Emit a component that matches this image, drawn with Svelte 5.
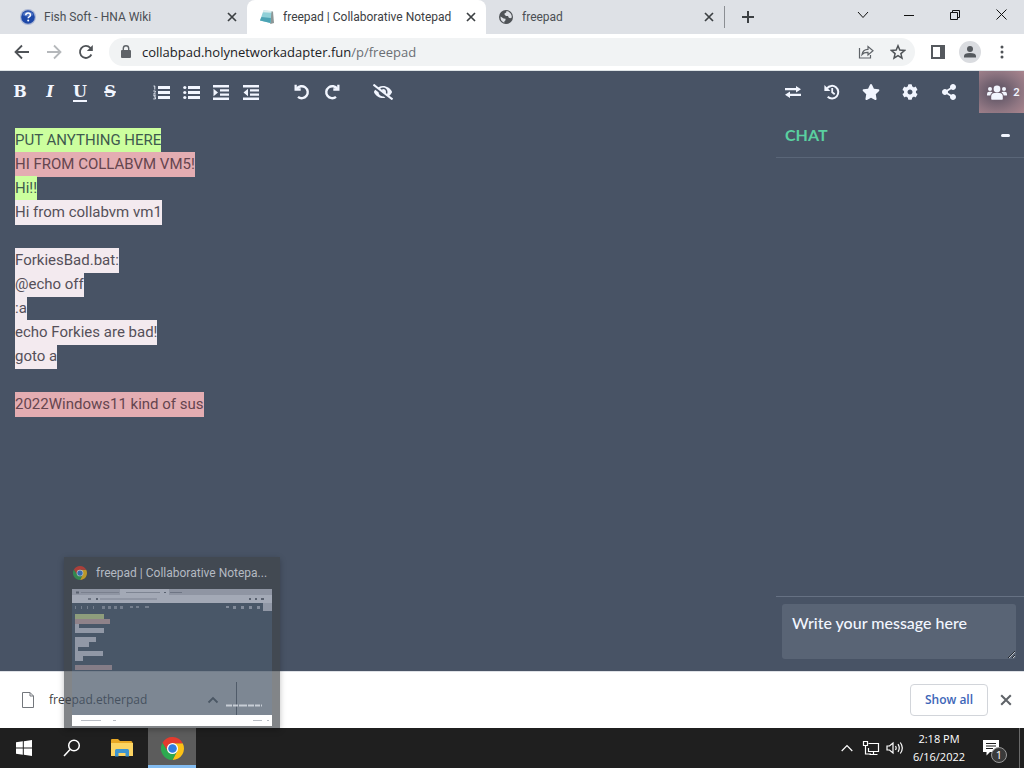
<script>
  const tabs = [
    { title: 'Fish Soft - HNA Wiki', icon: 'help' },
    { title: 'freepad | Collaborative Notepad', icon: 'pad', active: true },
    { title: 'freepad', icon: 'globe' }
  ];

  const lines = [
    { text: 'PUT ANYTHING HERE', author: 'green' },
    { text: 'HI FROM COLLABVM VM5!', author: 'rose' },
    { text: 'Hi!!', author: 'green' },
    { text: 'Hi from collabvm vm1', author: 'pale' },
    { text: '' },
    { text: 'ForkiesBad.bat:', author: 'pale' },
    { text: '@echo off', author: 'pale' },
    { text: ':a', author: 'pale' },
    { text: 'echo Forkies are bad!', author: 'pale' },
    { text: 'goto a', author: 'pale' },
    { text: '' },
    { text: '2022Windows11 kind of sus', author: 'rose' }
  ];

  const textTools = [
    { glyph: 'B', name: 'Bold', cls: 'b' },
    { glyph: 'I', name: 'Italic', cls: 'i' },
    { glyph: 'U', name: 'Underline', cls: 'u' },
    { glyph: 'S', name: 'Strikethrough', cls: 's' }
  ];
</script>

{#snippet cross(size)}
  <svg width={size} height={size} viewBox="0 0 10 10" aria-hidden="true">
    <path d="M1 1l8 8M9 1l-8 8" fill="none" stroke="currentColor" stroke-width="1.7" />
  </svg>
{/snippet}

{#snippet chrome(size)}
  <svg width={size} height={size} viewBox="0 0 48 48" aria-hidden="true">
    <path d="M24 13L45.3 13A24 24 0 0 1 24 48L33.5 29.5Z" fill="#fbc116" />
    <path d="M3.2 12L14.5 29.5L33.5 29.5L24 48A24 24 0 0 1 3.2 12Z" fill="#2da94f" />
    <path d="M3.2 12A24 24 0 0 1 45.3 13H24L14.5 29.5Z" fill="#e33b2e" />
    <circle cx="24" cy="24" r="11.5" fill="#fff" />
    <circle cx="24" cy="24" r="9" fill="#2f7de1" />
  </svg>
{/snippet}

<div class="screen">
  <header class="tabstrip">
    {#each tabs as tab}
      <div class="tab" class:active={tab.active}>
        <span class="favicon">
          {#if tab.icon === 'help'}
            <svg width="16" height="16" viewBox="0 0 16 16" aria-hidden="true">
              <circle cx="8" cy="8" r="8" fill="#aab6d4" />
              <circle cx="8" cy="8" r="6.8" fill="#1d48a8" />
              <path d="M2.5 6a5.8 5 0 0 1 11 0q-5.500 3-11 0" fill="#6689d0" opacity=".7" />
              <path d="M5.700 6.300q.2-2.200 2.400-2.200 2.300 0 2.300 1.900 0 1.200-1.200 1.800-1 .5-1 1.400" fill="none" stroke="#fff" stroke-width="1.500" />
              <circle cx="8.200" cy="11.500" r="1" fill="#fff" />
            </svg>
          {:else if tab.icon === 'pad'}
            <svg width="16" height="16" viewBox="0 0 16 16" aria-hidden="true">
              <path d="M5 2L14 2.500l1 11.500-3.500 1z" fill="#8d9797" />
              <path d="M4.500 1.500L12.500 2 11.500 14 1 11.500z" fill="#8fd0d8" />
              <path d="M2.500 8l9.400 1-.4 5L1 11.500z" fill="#4ba3b4" />
              <path d="M4.500 1.500L12.500 2l-.2 1.800-8.500-.5z" fill="#dceced" />
            </svg>
          {:else}
            <svg width="16" height="16" viewBox="0 0 16 16" aria-hidden="true">
              <circle cx="8" cy="8" r="7" fill="#4f5357" />
              <path d="M2.600 7.500l3 2 1.900.2v1.600l-1.200 1.200v1.300A6 6 0 0 1 2.600 7.500zM8.500 2.100l-.3 1.300-1.700 1v1.200L8 7h2l.8 1.800 1.500.5 1.500-.8A6 6 0 0 0 8.500 2.100z" fill="#dee1e6" />
            </svg>
          {/if}
        </span>
        <span class="title">{tab.title}</span>
        <button class="tab-close" aria-label="Close tab">{@render cross(10)}</button>
      </div>
    {/each}
    <button class="new-tab" aria-label="New tab">
      <svg width="14" height="14" viewBox="0 0 14 14"><path d="M7 1v12M1 7h12" stroke="currentColor" stroke-width="2" /></svg>
    </button>
    <div class="window-controls">
      <button aria-label="Search tabs"><svg width="12" height="12" viewBox="0 0 12 12"><path d="M1 3l5 5.500L11 3" /></svg></button>
      <button aria-label="Minimize"><svg width="10" height="10" viewBox="0 0 10 10"><path d="M0 5.500h10" /></svg></button>
      <button aria-label="Restore"><svg width="10" height="10" viewBox="0 0 10 10"><path d="M.5 2.500h7v7h-7zM2.500 2.500v-2h7v7h-2" /></svg></button>
      <button aria-label="Close"><svg width="11" height="11" viewBox="0 0 11 11"><path d="M.5.5l10 10M10.500.5l-10 10" /></svg></button>
    </div>
  </header>

  <nav class="navbar">
    <div class="nav-buttons">
      <button aria-label="Back"><svg width="16" height="16" viewBox="0 0 16 16"><path d="M15 8H2M8 1.500L1.500 8 8 14.500" /></svg></button>
      <button class="off" aria-label="Forward" disabled><svg width="16" height="16" viewBox="0 0 16 16"><path d="M1 8h13M8 1.500L14.500 8 8 14.500" /></svg></button>
      <button aria-label="Reload"><svg width="16" height="16" viewBox="0 0 16 16"><path d="M13.400 10.500A6 6 0 1 1 12.300 3.800L13.500 5" /><path d="M14.800 1v6h-6z" fill="currentColor" stroke="none" /></svg></button>
    </div>
    <div class="omnibox">
      <svg class="lock" width="10" height="14" viewBox="0 0 10 14" aria-hidden="true"><rect y="5" width="10" height="8" rx="1" fill="#5f6368" /><path d="M2.300 5.500V3.500a2.700 2.700 0 0 1 5.400 0v2" fill="none" stroke="#5f6368" stroke-width="1.400" /></svg>
      <span class="url">collabpad.holynetworkadapter.fun<span>/p/freepad</span></span>
      <button aria-label="Share"><svg width="16" height="16" viewBox="0 0 16 16"><path d="M1.500 4v10h11v-3M4 10.500q.8-5 6-5.200V2.500l5 4.300-5 4.200V8.300q-4-.2-6 2.200z" fill="none" stroke="#5f6368" stroke-width="1.200" /></svg></button>
      <button aria-label="Bookmark"><svg width="16" height="16" viewBox="0 0 16 16"><path d="M8 1.800l1.800 4.300 4.700.4-3.600 3.100 1.100 4.600-4-2.500-4 2.500 1.100-4.600-3.600-3.100 4.700-.4z" fill="none" stroke="#4f5357" stroke-width="1.500" /></svg></button>
    </div>
    <div class="nav-end">
      <button aria-label="Side panel"><svg width="14" height="14" viewBox="0 0 14 14"><path d="M1 1h12v12H1z" fill="none" stroke="#55595e" stroke-width="2" /><path d="M9 1h4v12H9z" fill="#55595e" /></svg></button>
      <button class="avatar" aria-label="Profile"><svg width="14" height="14" viewBox="0 0 14 14"><circle cx="7" cy="4" r="3" fill="#55595e" /><path d="M1 12.500V11q0-3 6-3t6 3v1.500z" fill="#55595e" /></svg></button>
      <button aria-label="Menu"><svg width="4" height="14" viewBox="0 0 4 14"><g fill="#4f5357"><circle cx="2" cy="2" r="1.500" /><circle cx="2" cy="7" r="1.500" /><circle cx="2" cy="12" r="1.500" /></g></svg></button>
    </div>
  </nav>

  <main class="pad">
    <div class="toolbar">
      <div class="tool-group">
        {#each textTools as tool}
          <button class="letter {tool.cls}" aria-label={tool.name}>{tool.glyph}</button>
        {/each}
      </div>
      <div class="tool-group">
        <button aria-label="Ordered list">
          <svg width="17" height="15" viewBox="0 0 17 15"><path d="M5 1h12v3H5zM5 6h12v3H5zM5 11h12v3H5z" /><path d="M.5 1h1.300v3.500M.3 6h2v1.300L.5 9h2.300M.3 10.700h2.200L1.500 12.200l1 .3v1.400H.3" fill="none" stroke="currentColor" stroke-width=".9" /></svg>
        </button>
        <button aria-label="Unordered list">
          <svg width="17" height="15" viewBox="0 0 17 15"><path d="M5 1h12v3H5zM5 6h12v3H5zM5 11h12v3H5z" /><circle cx="1.800" cy="2.500" r="1.600" /><circle cx="1.800" cy="7.500" r="1.600" /><circle cx="1.800" cy="12.500" r="1.600" /></svg>
        </button>
        <button aria-label="Indent">
          <svg width="16" height="15" viewBox="0 0 16 15"><path d="M0 0h16v2.500H0zM7 4.200h9v2.400H7zM7 8.400h9v2.400H7zM0 12.500h16V15H0zM.5 3.800v7.400L5 7.500z" /></svg>
        </button>
        <button aria-label="Outdent">
          <svg width="16" height="15" viewBox="0 0 16 15"><path d="M0 0h16v2.500H0zM7 4.200h9v2.400H7zM7 8.400h9v2.400H7zM0 12.500h16V15H0zM5 3.800v7.400L.5 7.500z" /></svg>
        </button>
      </div>
      <div class="tool-group">
        <button aria-label="Undo">
          <svg width="16" height="16" viewBox="0 0 16 16"><path d="M2.800 4.800A6 6 0 1 1 4 12.900" fill="none" stroke="currentColor" stroke-width="2.400" /><path d="M.5.8h2.300v3.400h3.900v2.500H.5z" /></svg>
        </button>
        <button aria-label="Redo">
          <svg width="16" height="16" viewBox="0 0 16 16"><path d="M13.200 4.800A6 6 0 1 0 12 12.900" fill="none" stroke="currentColor" stroke-width="2.400" /><path d="M15.500.8h-2.300v3.400H9.300v2.500h6.200z" /></svg>
        </button>
      </div>
      <div class="tool-group">
        <button aria-label="Clear authorship colors">
          <svg width="20" height="16" viewBox="0 0 640 512"><path d="M320 400c-75.900 0-137.200-58.700-142.900-133.100L72.200 185.800c-13.800 17.300-26.500 35.600-36.700 55.600a32.400 32.400 0 0 0 0 29.200C89.700 376.400 197.100 448 320 448c26.900 0 52.900-4 77.900-10.500L346 397.400A144 144 0 0 1 320 400zm313.800 58.100L523.300 372.700A331 331 0 0 0 604.500 270.600a32.400 32.400 0 0 0 0-29.200C550.300 135.600 442.900 64 320 64a308 308 0 0 0-147.300 37.700L45.500 3.400A16 16 0 0 0 23 6.200L3.400 31.500A16 16 0 0 0 6.200 53.900l588.400 454.700a16 16 0 0 0 22.400-2.800l19.600-25.300a16 16 0 0 0-2.800-22.400zM450.200 316.200l-39.300-30.400A94.800 94.800 0 0 0 416 256a94.800 94.800 0 0 0-121.300-92.200A47.700 47.700 0 0 1 304 192c0 3.400-.4 6.700-1 10l-73.600-56.900A142 142 0 0 1 320 112a144 144 0 0 1 144 144c0 21.600-5.300 41.800-13.800 60.200z" /></svg>
        </button>
      </div>

      <div class="tool-group right">
        <button aria-label="Import/Export">
          <svg width="16" height="12" viewBox="0 0 16 12"><path d="M0 2h11V0l5 3.200-5 3.200V4.300H0zM16 7.700H5V5.600L0 8.800 5 12v-2h11z" /></svg>
        </button>
        <button aria-label="History">
          <svg width="16" height="16" viewBox="0 0 16 16"><path d="M3 4.300A6.300 6.300 0 1 1 3.700 12.800" fill="none" stroke="currentColor" stroke-width="2" /><path d="M.4.9v6h6z" /><path d="M8.200 4v4.300l2.500 1.900" fill="none" stroke="currentColor" stroke-width="1.800" /></svg>
        </button>
        <button aria-label="Save revision">
          <svg width="18" height="16" viewBox="0 0 576 512"><path d="M259.300 17.800L194 150.200 47.900 171.500c-26.200 3.800-36.700 36.100-17.700 54.600l105.700 103-25 145.500c-4.500 26.300 23.200 46 46.400 33.700L288 439.600l130.700 68.700c23.200 12.200 50.900-7.400 46.400-33.700l-25-145.500 105.700-103c19-18.500 8.500-50.800-17.700-54.600L382 150.200 316.700 17.800c-11.700-23.600-45.600-23.900-57.400 0z" /></svg>
        </button>
        <button aria-label="Settings">
          <svg width="16" height="16" viewBox="0 0 512 512"><path d="M487.400 315.700l-42.600-24.600c4.300-23.200 4.300-47 0-70.200l42.600-24.600c4.900-2.800 7.100-8.600 5.500-14-11.100-35.600-30-67.800-54.700-94.600-3.800-4.100-10-5.100-14.800-2.300L380.800 110c-17.900-15.400-38.500-27.300-60.800-35.100V25.800c0-5.600-3.900-10.500-9.400-11.700-36.700-8.200-74.300-7.800-109.200 0-5.500 1.200-9.400 6.100-9.400 11.700V75c-22.200 7.900-42.800 19.800-60.800 35.100L88.700 85.500c-4.900-2.800-11-1.900-14.800 2.300-24.700 26.700-43.600 58.900-54.700 94.600-1.700 5.400.6 11.200 5.500 14L67.300 221c-4.300 23.200-4.300 47 0 70.200l-42.600 24.600c-4.900 2.800-7.100 8.600-5.500 14 11.100 35.600 30 67.800 54.700 94.600 3.800 4.100 10 5.100 14.800 2.300l42.600-24.600c17.900 15.400 38.500 27.300 60.800 35.100v49.200c0 5.600 3.900 10.500 9.400 11.700 36.700 8.200 74.300 7.800 109.200 0 5.500-1.200 9.400-6.100 9.400-11.700v-49.200c22.200-7.900 42.800-19.800 60.800-35.100l42.600 24.600c4.900 2.800 11 1.900 14.800-2.300 24.700-26.700 43.600-58.900 54.700-94.600 1.500-5.500-.7-11.300-5.600-14.100zM256 336c-44.100 0-80-35.900-80-80s35.900-80 80-80 80 35.900 80 80-35.900 80-80 80z" /></svg>
        </button>
        <button aria-label="Share pad">
          <svg width="14" height="16" viewBox="0 0 448 512"><path d="M352 320c-22.600 0-43.400 7.800-59.800 20.900l-102.500-64a96.600 96.600 0 0 0 0-41.700l102.500-64.100C308.600 184.200 329.400 192 352 192c53 0 96-43 96-96S405 0 352 0s-96 43-96 96c0 7.200.8 14.100 2.300 20.800L155.800 180.900C139.400 167.800 118.600 160 96 160c-53 0-96 43-96 96s43 96 96 96c22.600 0 43.400-7.800 59.800-20.900l102.500 64.100A96.300 96.300 0 0 0 256 416c0 53 43 96 96 96s96-43 96-96-43-96-96-96z" /></svg>
        </button>
        <button class="users" aria-label="Users">
          <svg width="20" height="15" viewBox="0 0 20 15"><circle cx="10" cy="4" r="3.400" /><circle cx="3" cy="4" r="2" /><circle cx="17" cy="4" r="2" /><path d="M4.200 14V11.500Q4.200 8 7.600 8h4.800q3.400 0 3.400 3.500V14q0 .7-.8.700H5q-.8 0-.8-.7zM0 10V9q0-2.300 2.200-2.300h1.700q1 0 1.600.7Q3.500 8.500 3.300 10.500H.5Q0 10.500 0 10zM20 10V9q0-2.300-2.200-2.300h-1.700q-1 0-1.600.7 2 1.100 2.200 3.100h2.800q.5 0 .5-.5z" /></svg>
          <span>2</span>
        </button>
      </div>
    </div>

    <div class="workspace">
      <div class="editor" role="textbox" aria-label="Pad contents" aria-multiline="true" tabindex="0">
        {#each lines as line}
          <div class="line">{#if line.text}<span class={line.author}>{line.text}</span>{/if}</div>
        {/each}
      </div>
      <aside class="chat">
        <div class="chat-head">
          <h1>CHAT</h1>
          <button aria-label="Minimize chat"></button>
        </div>
        <div class="chat-log"></div>
        <div class="chat-input">
          <textarea placeholder="Write your message here" aria-label="Chat message"></textarea>
        </div>
      </aside>
    </div>
  </main>

  <section class="downloads">
    <button class="download">
      <svg width="14" height="18" viewBox="0 0 14 18"><path d="M1.500 1.500h7.500l3.500 3.500v11.500h-11zM9 1.500V5h3.500" fill="#fff" stroke="#73777c" stroke-width="1" /></svg>
      <span>freepad.etherpad</span>
    </button>
    <button class="more" aria-label="Download options"><svg width="12" height="8" viewBox="0 0 12 8"><path d="M1.500 6.500L6 2l4.500 4.500" fill="none" stroke="#4f5357" stroke-width="1.800" /></svg></button>
    <button class="show-all">Show all</button>
    <button class="shelf-close" aria-label="Close downloads bar">{@render cross(12)}</button>
  </section>

  <footer class="taskbar">
    <button aria-label="Start"><svg width="16" height="16" viewBox="0 0 16 16"><path d="M0 2.300L6.800 1.300v6.200H0zM7.800 1.200L16 0v7.500H7.800zM0 8.500h6.800v6.200L0 13.700zM7.800 8.500H16V16l-8.200-1.200z" fill="#fff" /></svg></button>
    <button aria-label="Search"><svg width="18" height="18" viewBox="0 0 18 18"><circle cx="11" cy="6.500" r="5.300" fill="none" stroke="#fff" stroke-width="1.500" /><path d="M7 10.500L1 17" stroke="#fff" stroke-width="1.500" /></svg></button>
    <button class="files" aria-label="File Explorer"><svg width="22" height="18" viewBox="0 0 22 18"><path d="M0 1q0-1 1-1h6l2 2h11q1.500 0 1.500 1.500V17H0z" fill="#e9a825" /><path d="M0 4h22v13H0z" fill="#fcd462" /><path d="M4 17.500v-6q0-1.500 1.500-1.500h11q1.500 0 1.500 1.500v6h-3.500V14h-7v3.500z" fill="#3d94cf" /></svg></button>
    <button class="running" aria-label="Google Chrome">{@render chrome(23)}</button>
    <div class="tray">
      <button aria-label="Show hidden icons"><svg width="12" height="8" viewBox="0 0 12 8"><path d="M.7 7L6 1.500 11.300 7" /></svg></button>
      <button aria-label="Network"><svg width="18" height="16" viewBox="0 0 18 16"><path d="M6.500 3.500h10v8h-10V8M11.500 11.500v3M7.500 14.500h8M1.500 1.500h4v4h-4zM3.500 5.500v8.500H9" /></svg></button>
      <button aria-label="Volume"><svg width="18" height="14" viewBox="0 0 18 14"><path d="M1 5h2.500L7 2v10L3.500 9H1zM9.500 5q1.300 2 0 4M12 3.200q2.500 3.800 0 7.600M14.300 1.500q4 5.500 0 11" /></svg></button>
      <button class="clock"><span>2:18 PM</span><span>6/16/2022</span></button>
      <button class="notify" aria-label="Notifications"><svg width="18" height="16" viewBox="0 0 18 16"><path class="bubble" d="M1 0h16v12H8l-3.500 3.500V12H1z" /><path class="rule" d="M4 3.500h10M4 6h10M4 8.500h7" /></svg><span>1</span></button>
      <button class="desktop" aria-label="Show desktop"></button>
    </div>
  </footer>

  <div class="preview">
    <div class="preview-title">{@render chrome(14)}<span>freepad | Collaborative Notepa...</span></div>
    <svg class="thumb" viewBox="0 0 200 137" aria-hidden="true">
      <rect width="200" height="126" fill="#6991c3" opacity=".2" />
      <rect width="200" height="14" fill="#a3a9b6" />
      <rect width="48" height="6" fill="#8f95a3" />
      <rect x="97" width="103" height="6" fill="#8f95a3" />
      <g fill="#59616f">
        <rect x="4" y="2.500" width="3" height="2" /><rect x="9" y="3" width="38" height="1" opacity=".4" /><rect x="54" y="3" width="34" height="1" opacity=".5" /><rect x="92" y="3" width="2" height="1" /><rect x="98" y="3" width="12" height="1" opacity=".6" />
        <rect x="16" y="9" width="3" height="2" opacity=".7" /><rect x="24" y="9" width="2" height="2" /><rect x="28" y="9.500" width="57" height="1" opacity=".5" />
        <rect x="177" y="9" width="2" height="2" /><rect x="183" y="9" width="2" height="2" /><rect x="189" y="9" width="3" height="2" />
      </g>
      <g fill="#9198a6">
        <path d="M3 17h1v3H3zM9 17h1v3H9zM15 17h1v3h-1zM21 17h1v3h-1zM30 17h3v3h-3zM36 17h3v3h-3zM42 17h3v3h-3zM48 17h3v3h-3zM58 17h3v2h-3zM64 17h3v2h-3zM73 17h4v2h-4z" opacity=".6" />
        <path d="M154 17h3v2h-3zM161 17h3v3h-3zM169 17h3v3h-3zM177 17h3v3h-3zM185 17h3v3h-3z" opacity=".8" />
        <rect x="191" y="14" width="9" height="8" />
        <rect x="3" y="35" width="4" height="5" /><rect x="3" y="39" width="29" height="5" /><rect x="3" y="48" width="21" height="5" /><rect x="3" y="53" width="14" height="5" /><rect x="3" y="58" width="3" height="5" /><rect x="3" y="62" width="28" height="5" /><rect x="3" y="67" width="8" height="5" />
      </g>
      <rect x="3" y="25" width="29" height="5" fill="#8e9d7c" />
      <rect x="3" y="30" width="35" height="5" fill="#8f8289" />
      <rect x="3" y="76" width="37" height="5" fill="#857d87" />
      <path d="M154 116.500h36" stroke="#dbe0e7" stroke-width="2" stroke-dasharray="6 1 5 1 8 1" opacity=".8" />
      <rect y="126" width="200" height="11" fill="#fff" />
      <g fill="#b9bdc4"><rect x="9" y="131" width="20" height="1" /><rect x="41" y="131" width="3" height="1" /><rect x="181" y="131" width="9" height="1" /><rect x="195" y="131" width="2" height="1" /></g>
    </svg>
  </div>
</div>

<style>
  :global(body) { margin: 0; }
  .screen {
    position: relative;
    display: flex;
    flex-direction: column;
    min-height: 100vh;
    overflow: hidden;
    background: #fff;
    font: 12px/16px "Open Sans", "Noto Sans", sans-serif;
    color: #3c4043;
  }
  button {
    display: flex;
    align-items: center;
    justify-content: center;
    padding: 0;
    border: 0;
    background: none;
    color: inherit;
    font: inherit;
  }
  svg { display: block; flex: none; }

  .tabstrip { display: flex; height: 34px; padding-left: 8px; background: #dee1e6; }
  .tab { display: flex; flex: 0 1 239px; align-items: center; gap: 8px; min-width: 0; box-sizing: border-box; padding: 0 7px 0 12px; color: #4b4f54; }
  .tab.active { border-radius: 8px 8px 0 0; background: #fff; color: #3c4043; }
  .tab:nth-child(3) { border-right: 1px solid #8b8e93; border-image: linear-gradient(transparent 20%, #8b8e93 20%, #8b8e93 80%, transparent 80%) 1; }
  .title { flex: 1; overflow: hidden; white-space: nowrap; font-family: Roboto, sans-serif; }
  .tab-close { width: 16px; height: 16px; color: #3c4043; }
  .new-tab { width: 46px; color: #3c4043; }
  .window-controls { display: flex; margin-left: auto; height: 29px; }
  .window-controls button { width: 46px; }
  .window-controls path { fill: none; stroke: #111; stroke-width: 1; }

  .navbar { display: flex; align-items: center; height: 36px; border-bottom: 1px solid #dde3e6; background: #fff; color: #4f5357; }
  .nav-buttons { display: flex; padding: 0 7px 0 6px; }
  .nav-buttons button { width: 32px; height: 32px; }
  .nav-buttons path { fill: none; stroke: currentColor; stroke-width: 1.8; }
  .nav-buttons path:nth-child(2) { fill: currentColor; stroke: none; }
  .nav-buttons .off { color: #b5b8bb; }
  .omnibox { display: flex; flex: 1; align-items: center; height: 28px; padding: 0 1px 0 12px; border-radius: 14px; background: #f1f3f4; }
  .url { flex: 1; padding-left: 11px; font-size: 13px; line-height: 20px; color: #202124; }
  .url span { color: #6b6f74; }
  .omnibox button { width: 32px; height: 28px; }
  .nav-end { display: flex; align-items: center; padding: 0 6px 0 7px; }
  .nav-end button { width: 32px; height: 32px; }
  .nav-end .avatar { width: 22px; height: 22px; margin: 0 5px; border-radius: 50%; background: #dadce0; }

  .pad { display: flex; flex: 1; flex-direction: column; background: #485365; color: #f2f6ff; }
  .toolbar { display: flex; gap: 21px; height: 42px; padding-left: 5px; }
  .tool-group { display: flex; }
  .tool-group button { width: 30px; }
  .tool-group svg { fill: currentColor; }
  .letter { font: bold 16px/20px "DejaVu Serif", serif; }
  .letter.i { font-style: italic; }
  .letter.u { text-decoration: underline 2px; text-underline-offset: 3px; }
  .letter.s { text-decoration: line-through 2px; }
  .right { margin-left: auto; }
  .tool-group.right button { width: 39px; }
  .tool-group.right .users { width: 45px; margin-left: 11px; gap: 6px; padding-left: 4px; font: bold 11px/16px Lato, sans-serif; background: radial-gradient(ellipse at 40% 50%, #6b5d6c 25%, #8f7682 65%, #aa858e); }

  .workspace { display: flex; flex: 1; }
  .editor { flex: 1; padding: 15px; font: 15px/24px Roboto, sans-serif; color: #485365; outline: 0; }
  .line { min-height: 24px; }
  .line span { padding: 3px 0 4px; }
  .green { background: #ccff9e; color: #3f5a4e; }
  .rose { background: #e4adb2; color: #65454f; }
  .pale { background: #f3eaef; color: #555059; }

  .chat { display: flex; flex-direction: column; flex: 0 0 248px; font-family: Lato, sans-serif; }
  .chat-head { display: flex; align-items: center; justify-content: space-between; height: 44px; padding: 0 14px 0 9px; border-bottom: 1px solid #5a6678; }
  .chat-head h1 { margin: 0; font-size: 16px; line-height: 20px; font-weight: 700; color: #5ad0a0; }
  .chat-head button { width: 9px; height: 3px; border-radius: 2px; background: #f2f6ff; }
  .chat-log { flex: 1; }
  .chat-input { padding: 7px 8px 12px 6px; border-top: 1px solid #667183; }
  textarea { display: block; box-sizing: border-box; width: 100%; height: 55px; padding: 9px 10px; border: 0; border-radius: 3px; background: #596475; color: #f2f6ff; font: 500 16px/20px Lato, sans-serif; outline: 0; }
  textarea::placeholder { color: #f2f6ff; opacity: 1; }

  .downloads { display: flex; align-items: center; height: 57px; box-sizing: border-box; padding: 0 8px 0 21px; background: #fff; border-top: 1px solid #dee1e6; }
  .download { flex: 0 0 168px; justify-content: flex-start; gap: 14px; color: #3c4043; }
  .more { justify-content: flex-end; box-sizing: border-box; width: 48px; height: 36px; padding-right: 17px; border-right: 1px solid #5f6368; }
  .show-all { width: 78px; height: 32px; margin-left: auto; border: 1px solid #d2d5da; border-radius: 4px; color: #3d66b8; font-weight: 600; }
  .shelf-close { width: 20px; height: 20px; margin-left: 8px; color: #5f6368; }

  .taskbar { display: flex; height: 40px; background: #1f1f1f; color: #fff; }
  .taskbar > button { width: 48px; }
  .taskbar > .files { width: 52px; }
  .taskbar > .running { background: #5c5c5c; box-shadow: inset 0 -3px #83bcf0; }
  .tray { display: flex; margin-left: auto; }
  .tray button { width: 24px; }
  .tray path { fill: none; stroke: #fff; stroke-width: 1.2; }
  .tray .clock { flex-direction: column; width: 64px; font-size: 11px; line-height: 18px; }
  .tray .notify { position: relative; width: 48px; padding-right: 8px; }
  .notify .bubble { fill: #fff; stroke: none; }
  .notify .rule { stroke: #1f1f1f; }
  .notify span { position: absolute; left: 20px; top: 19px; width: 14px; height: 14px; border: 1px solid #999; border-radius: 50%; background: #3a3a3a; font-size: 11px; line-height: 14px; }
  .tray .desktop { width: 5px; border-left: 1px solid #6a6a6a; }

  .preview { position: absolute; left: 64px; bottom: 40px; box-sizing: border-box; width: 216px; height: 171px; padding: 0 8px; background: rgba(63, 67, 72, .65); color: #b4bac2; box-shadow: 0 2px 6px rgba(0, 0, 0, .25); }
  .preview-title { display: flex; align-items: center; gap: 9px; height: 32px; padding: 0 4px 0 1px; }
  .preview-title svg { opacity: .65; }
  .preview-title span { white-space: nowrap; font-family: Roboto, sans-serif; }
  .thumb { width: 200px; height: 137px; }
</style>
